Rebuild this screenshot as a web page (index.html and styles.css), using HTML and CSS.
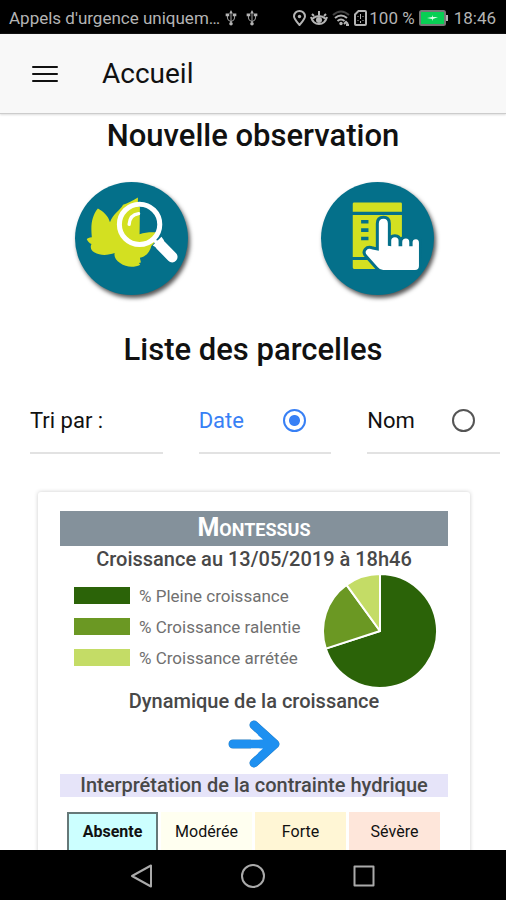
FILE: index.html
```html
<!DOCTYPE html>
<html lang="fr">
<head>
<meta charset="utf-8">
<meta name="viewport" content="width=device-width, initial-scale=1">
<title>Accueil</title>
<link rel="stylesheet" href="styles.css">
</head>
<body>
<div class="status">
  <span class="status-text">Appels d'urgence uniquem…</span>
  <svg class="usb" viewBox="0 0 12 18"><path d="M6 2v14M2 6v3q0 3 4 4M10 6v3q0 3-4 4" /><path class="solid" d="M6 0l2 4H4zM0 4h4v3H0zM8 4h4v3H8z"/><circle class="solid" cx="6" cy="15.500" r="2"/></svg>
  <svg class="usb" viewBox="0 0 12 18"><path d="M6 2v14M2 6v3q0 3 4 4M10 6v3q0 3-4 4" /><path class="solid" d="M6 0l2 4H4zM0 4h4v3H0zM8 4h4v3H8z"/><circle class="solid" cx="6" cy="15.500" r="2"/></svg>
  <div class="status-right">
    <svg width="13" height="16" viewBox="0 0 13 16"><path d="M6.500 15C4 12 1 9 1 6.300a5.500 5.300 0 0 1 11 0C12 9 9 12 6.500 15z"/><circle class="solid" cx="6.500" cy="6.500" r="1.700"/></svg>
    <svg width="18" height="16" viewBox="0 0 18 16"><path d="M1 7q2 7 8 7t8-7M2 9q7-6 14 0M9 5V1M4 6L2 4M14 6l2-2"/><circle class="solid" cx="9" cy="10" r="3"/></svg>
    <svg width="18" height="16" viewBox="0 0 18 16"><path class="dim" d="M1 5q8-7 16 0"/><path d="M3 8q6-5 12 0M5.500 11q3.500-3 7 0"/><circle class="solid" cx="9" cy="13.500" r="1.700"/><path d="M12 14l2-2 2 2M14 15h3"/></svg>
    <svg width="13" height="16" viewBox="0 0 13 16"><path d="M4.500 1H11q1 0 1 1v12q0 1-1 1H2q-1 0-1-1V4.500z"/><path class="fine" d="M6.500 4v5M6.500 11v2M4 6v1M9 6v1M4 10v1M9 10v1"/></svg>
    <span class="percent">100 %</span>
    <svg class="battery" width="29" height="16" viewBox="0 0 29 16"><rect x="1" y="1" width="25" height="14" rx="1.500" fill="#08cf54" stroke="#777"/><path class="solid" d="M27 5h2v6h-2z"/><path d="M8 8l5-1 1-2v2h5l-5 2-1 2V9z" fill="#d9ffe5" stroke="none"/></svg>
    <time>18:46</time>
  </div>
</div>

<header class="topbar">
  <button class="menu" aria-label="Menu"><svg width="26" height="18" viewBox="0 0 26 18"><path d="M1 2h24M1 9h24M1 16h24" stroke="#111" stroke-width="2" stroke-linecap="round"/></svg></button>
  <h1>Accueil</h1>
</header>

<main>
  <h2>Nouvelle observation</h2>
  <div class="actions">
    <div class="action">
      <button class="round" aria-label="Observer une parcelle">
        <svg viewBox="42 38 336 336">
          <path fill="#d3e021" d="M110 117C93 138 88 163 92 202C84 203 79 205 77 208C80 215 84 219 91 222C86 232 90 242 99 247C120 259 142 255 160 249C157 260 164 271 176 279C194 292 217 294 236 284L232 279L238 277L235 263C252 261 265 246 269 228C281 218 286 204 284 188C266 187 250 188 234 193L235 112L229 111V84C214 94 198 101 185 106C175 124 155 132 146 158C141 139 127 126 110 117Z"/>
          <circle cx="234" cy="164" r="60" fill="none" stroke="#fff" stroke-width="15"/>
          <path d="M203 164Q205 135 231 132" fill="none" stroke="#fff" stroke-width="10" stroke-linecap="round"/>
          <path d="M275 208L286 220" stroke="#fff" stroke-width="10"/>
          <path d="M296 225L331 261" stroke="#fff" stroke-width="32" stroke-linecap="round"/>
          <path d="M273 227L299 201L307 212L286 234Z" fill="#fff"/>
        </svg>
      </button>
    </div>
    <div class="action">
      <button class="round" aria-label="Saisir une observation">
        <svg viewBox="32 38 338 338">
          <path fill="#d3e021" d="M127 103Q127 99 131 99H270Q274 99 274 103V127H127ZM127 137H274V262H127ZM127 271H205V298H131Q127 298 127 294Z"/>
          <path d="M152 157h22M152 182h22M152 207h22" stroke="#04708a" stroke-width="11"/>
          <path fill="#fff" stroke="#04708a" stroke-width="18" stroke-linejoin="round" paint-order="stroke" d="M205 244V162Q205 148 219 148Q232 148 232 162V229L242 230V214Q242 203 253 203Q264 203 264 214V230H275V218Q275 207 286 207Q296 207 296 218V230H306V218Q306 209 316 209Q325 209 325 220V289Q325 301 313 301H218Q208 301 202 293L170 257Q162 249 168 242Q174 235 186 240Z"/>
        </svg>
      </button>
    </div>
  </div>

  <h2>Liste des parcelles</h2>
  <form class="sort">
    <div class="sort-col"><div class="sort-item">Tri par :</div></div>
    <div class="sort-col"><div class="sort-item"><label class="selected" for="date">Date</label><input type="radio" name="tri" id="date" checked></div></div>
    <div class="sort-col"><div class="sort-item"><label for="nom">Nom</label><input type="radio" name="tri" id="nom"></div></div>
  </form>

  <article class="card">
    <h3 class="name">Montessus</h3>
    <h4>Croissance au 13/05/2019 à 18h46</h4>
    <div class="growth">
      <ul class="legend">
        <li><span class="swatch full"></span>% Pleine croissance</li>
        <li><span class="swatch slow"></span>% Croissance ralentie</li>
        <li><span class="swatch stopped"></span>% Croissance arrétée</li>
      </ul>
      <svg class="pie" viewBox="-57 -57 114 114" stroke="#fff" stroke-width="2" stroke-linejoin="round">
        <path fill="#2b6308" d="M0 0V-57A57 57 0 1 1 -54.200 17.600Z"/>
        <path fill="#6b9823" d="M0 0L-54.200 17.600A57 57 0 0 1 -33.500 -46.100Z"/>
        <path fill="#c4dc66" d="M0 0L-33.500 -46.100A57 57 0 0 1 0 -57Z"/>
      </svg>
    </div>
    <h4>Dynamique de la croissance</h4>
    <svg class="arrow" width="54" height="50" viewBox="0 0 54 50">
      <path fill="none" stroke="#237ac0" stroke-width="9" stroke-linecap="round" stroke-linejoin="round" d="M6 25H47M27 6L48 25L27 44"/>
      <path fill="none" stroke="#1e90f0" stroke-width="8" stroke-linecap="round" stroke-linejoin="round" d="M6 25H47M27 6L48 25L27 44"/>
      <path fill="#1e90f0" d="M34 25L30 13L46 25L30 37Z"/>
      <path fill="#fff" d="M24 20.500V10L36 20.500ZM24 29.500V40L36 29.500Z"/>
    </svg>
    <h4 class="band">Interprétation de la contrainte hydrique</h4>
    <ul class="levels">
      <li class="none">Absente</li>
      <li class="moderate">Modérée</li>
      <li class="strong">Forte</li>
      <li class="severe">Sévère</li>
    </ul>
  </article>
</main>

<nav class="system">
  <button aria-label="Retour"><svg width="26" height="26" viewBox="0 0 26 26"><path d="M22 2.500V23.500L3 13Z"/></svg></button>
  <button aria-label="Accueil"><svg width="26" height="26" viewBox="0 0 26 26"><circle cx="13" cy="13" r="11"/></svg></button>
  <button aria-label="Applications"><svg width="26" height="26" viewBox="0 0 26 26"><rect x="3.500" y="3.500" width="19" height="19"/></svg></button>
</nav>
</body>
</html>
```
FILE: styles.css
```css
* { box-sizing: border-box; }
body {
  margin: 0;
  height: 100vh;
  display: flex;
  flex-direction: column;
  overflow: hidden;
  background: #fff;
  color: #111;
  font-family: Roboto, "Liberation Sans", sans-serif;
}
h1, h2, h3, h4, ul { margin: 0; padding: 0; }
ul { list-style: none; }
button { border: 0; padding: 0; background: none; }
svg { display: block; flex: none; }

.status {
  flex: none;
  height: 34px;
  padding: 2px 10px 0 9px;
  display: flex;
  align-items: center;
  background: #000;
  color: #b4b4b4;
  font-size: 17px;
  white-space: nowrap;
}
.status svg { fill: none; stroke: #b4b4b4; stroke-width: 2; }
.status .solid { fill: #b4b4b4; stroke: none; }
.status .dim { stroke: #444; }
.status .fine { stroke-width: 1; }
.status .usb { width: 12px; height: 16px; margin-left: 5px; stroke-width: 1; }
.status .usb + .usb { margin-left: 9px; }
.status-right { margin-left: auto; display: flex; align-items: center; gap: 4px; }
.percent { margin-left: -2px; }
.status-right time { margin-left: 2px; }

.topbar {
  flex: none;
  height: 80px;
  padding-left: 32px;
  display: flex;
  align-items: center;
  gap: 44px;
  background: #f8f8f8;
  border-bottom: 1px solid #ccc;
  box-shadow: 0 1px 2px #ddd;
  z-index: 1;
}
h1 { font-size: 28px; font-weight: 400; line-height: 32px; }

main { flex: 1; min-height: 0; overflow: hidden; padding-top: 1px; }
h2 { text-align: center; font-size: 31px; line-height: 42px; font-weight: 500; }
.actions {
  display: flex;
  justify-content: space-between;
  padding: 25px 72px 34px 75px;
}
.round {
  display: block;
  width: 113px;
  height: 113px;
  border-radius: 50%;
  background: #04708a;
  box-shadow: 2px 3px 4px #555;
}

.sort { display: grid; grid-template-columns: repeat(3, 1fr); margin-top: 18px; }
.sort-col { padding: 0 6px 0 30px; }
.sort-item {
  height: 65px;
  padding-right: 25px;
  display: flex;
  align-items: center;
  justify-content: space-between;
  border-bottom: 2px solid #e2e2e2;
  font-size: 22px;
}
.selected { color: #3880f5; }
input[type="radio"] {
  appearance: none;
  margin: 0;
  width: 23px;
  height: 23px;
  border: 2px solid #555;
  border-radius: 50%;
}
input[type="radio"]:checked {
  border-color: #3880f5;
  background: radial-gradient(circle, #3880f5 5px, #fff 6px);
}

.card {
  margin: 38px 36px 0 38px;
  padding: 19px 22px;
  border-radius: 3px;
  box-shadow: 0 0 4px #ccc;
}
.name {
  height: 35px;
  background: #84919b;
  color: #fff;
  text-align: center;
  font-size: 18px;
  line-height: 34px;
  font-weight: 700;
  text-transform: uppercase;
}
.name::first-letter { font-size: 25px; }
h4 { text-align: center; color: #484848; font-size: 20px; line-height: 26px; font-weight: 500; }
.growth {
  display: flex;
  align-items: flex-start;
  justify-content: space-between;
  padding: 2px 11px 0 14px;
}
.legend { padding-top: 6px; }
.legend li {
  height: 31px;
  display: flex;
  align-items: center;
  gap: 9px;
  color: #707070;
  font-size: 17px;
}
.swatch { width: 56px; height: 17px; }
.full { background: #2b6308; }
.slow { background: #6b9823; }
.stopped { background: #c4dc66; }
.pie { width: 114px; height: 114px; }
.arrow { margin: 5px auto; }
.band { background: #e6e4f9; line-height: 23px; }
.levels {
  display: grid;
  grid-template-columns: repeat(4, 1fr);
  gap: 3px;
  padding: 15px 8px 0 7px;
}
.levels li {
  height: 40px;
  text-align: center;
  font-size: 16px;
  line-height: 38px;
  border: 1px solid transparent;
}
.levels .none { background: #cff; border: 2px solid #667878; font-weight: 700; line-height: 36px; }
.moderate { background: #fffff0; }
.strong { background: #fff6d5; }
.severe { background: #fee6da; }

.system {
  flex: none;
  height: 50px;
  padding: 1px 17% 0;
  display: grid;
  grid-template-columns: repeat(3, 1fr);
  place-items: center;
  background: #000;
  z-index: 1;
}
.system svg { fill: none; stroke: #aaa; stroke-width: 2; stroke-linejoin: round; }
```
